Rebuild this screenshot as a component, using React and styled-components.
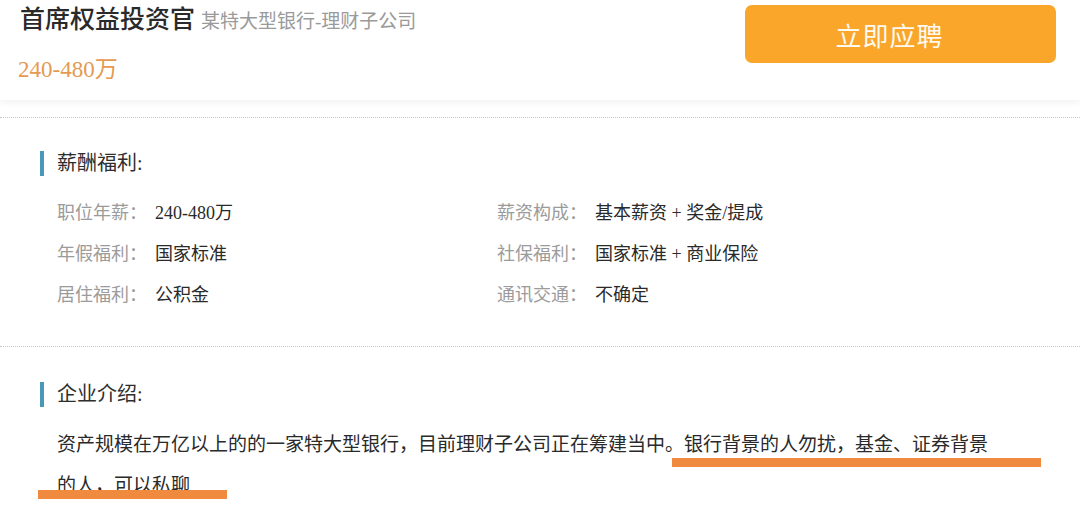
import styled, { createGlobalStyle } from "styled-components";

const GlobalStyle = createGlobalStyle`
  html, body {
    margin: 0;
    padding: 0;
    background: #ffffff;
  }
  body {
    font-family: "Liberation Serif", "Noto Sans CJK SC", serif;
    color: #333333;
    width: 1080px;
    overflow: hidden;
  }
`;

const benefits = [
  ["职位年薪：", "240-480万", "薪资构成：", "基本薪资 + 奖金/提成"],
  ["年假福利：", "国家标准", "社保福利：", "国家标准 + 商业保险"],
  ["居住福利：", "公积金", "通讯交通：", "不确定"],
];

const App = () => {
  return (
    <Page>
      <GlobalStyle />
      <Header>
        <JobInfo>
          <TitleRow>
            <JobTitle>首席权益投资官</JobTitle>
            <Company>某特大型银行-理财子公司</Company>
          </TitleRow>
          <Salary>240-480万</Salary>
        </JobInfo>
        <ApplyButton>立即应聘</ApplyButton>
      </Header>

      <Section $top={33} $bottom={30}>
        <SectionTitle>薪酬福利:</SectionTitle>
        <InfoGrid>
          {benefits.map(([l1, v1, l2, v2]) => (
            <InfoRow key={l1}>
              <InfoItem>
                <Label>{l1}</Label>
                <Value>{v1}</Value>
              </InfoItem>
              <InfoItem>
                <Label>{l2}</Label>
                <Value>{v2}</Value>
              </InfoItem>
            </InfoRow>
          ))}
        </InfoGrid>
      </Section>

      <Section $top={35} $bottom={0}>
        <SectionTitle>企业介绍:</SectionTitle>
        <Intro>
          资产规模在万亿以上的的一家特大型银行，目前理财子公司正在筹建当中。银行背景的人勿扰，基金、证券背景的人，可以私聊
        </Intro>
        <Mark $left={672} $top={111} $width={369} />
        <Mark $left={38} $top={143} $width={189} />
      </Section>
    </Page>
  );
};

export default App;

const Page = styled.div`
  width: 1080px;
  height: 507px;
  overflow: hidden;
  background: #fff;
`;

const Header = styled.div`
  height: 100px;
  display: flex;
  justify-content: space-between;
  align-items: flex-start;
  padding: 4px 24px 0 20px;
  box-sizing: border-box;
  box-shadow: 0 4px 7px rgba(0, 0, 0, 0.045);
  margin-bottom: 17px;
`;

const JobInfo = styled.div`
  display: flex;
  flex-direction: column;
`;

const TitleRow = styled.div`
  display: flex;
  align-items: baseline;
  gap: 6px;
  height: 32px;
  line-height: 32px;
`;

const JobTitle = styled.span`
  font-size: 25px;
  font-weight: 500;
  color: #2a2a2a;
`;

const Company = styled.span`
  font-size: 19px;
  color: #9a9a9a;
`;

const Salary = styled.div`
  margin-top: 18px;
  font-size: 23px;
  line-height: 32px;
  color: #e59a52;
  margin-left: -2px;
`;

const ApplyButton = styled.button`
  width: 311px;
  height: 58px;
  margin-top: 1px;
  border: none;
  border-radius: 7px;
  background: #f9a62b;
  color: #fffaf0;
  font-family: inherit;
  font-size: 26px;
  letter-spacing: 1px;
  padding: 0 22px 0 0;
  cursor: pointer;
`;

const Section = styled.div`
  position: relative;
  padding: ${(p) => p.$top}px 40px ${(p) => p.$bottom}px 40px;
  border-top: 1px dotted #c8c8c8;
`;

const SectionTitle = styled.div`
  border-left: 4px solid #4a98b8;
  padding-left: 13px;
  height: 25px;
  line-height: 25px;
  font-size: 20px;
  color: #2e2e2e;
`;

const InfoGrid = styled.div`
  margin-top: 17px;
  padding-left: 17px;
`;

const InfoRow = styled.div`
  display: grid;
  grid-template-columns: 440px 1fr;
  height: 41px;
  align-items: center;
`;

const InfoItem = styled.div`
  display: flex;
  font-size: 18px;
  line-height: 41px;
`;

const Label = styled.span`
  width: 98px;
  color: #9b9b9b;
`;

const Value = styled.span`
  color: #2a2a2a;
`;

const Intro = styled.p`
  margin: 17px 0 0 17px;
  width: 940px;
  font-size: 19px;
  line-height: 41px;
  color: #2a2a2a;
`;

const Mark = styled.div`
  position: absolute;
  left: ${(p) => p.$left}px;
  top: ${(p) => p.$top}px;
  width: ${(p) => p.$width}px;
  height: 9px;
  background: #f08a3e;
`;
